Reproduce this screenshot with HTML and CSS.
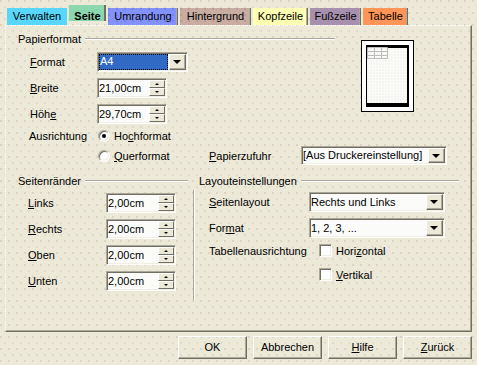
FILE: index.html
```html
<!DOCTYPE html>
<html lang="de">
<head>
<meta charset="utf-8">
<title>Seitenvorlage</title>
<link rel="stylesheet" href="styles.css">
</head>
<body>
<div class="dialog">
  <div class="tabs">
    <div class="tab t-verwalten">Verwalten</div>
    <div class="tab t-seite">Seite</div>
    <div class="tab t-umrandung">Umrandung</div>
    <div class="tab t-hintergrund">Hintergrund</div>
    <div class="tab t-kopf">Kopfzeile</div>
    <div class="tab t-fuss">Fußzeile</div>
    <div class="tab t-tabelle">Tabelle</div>
  </div>

  <div class="panel">
    <div class="pf">
      <div class="legend pf-legend"><span>Papierformat</span><i class="line"></i></div>

      <div class="row r-format">
        <span class="lbl"><u>F</u>ormat</span>
        <div class="field select sel-a4"><span class="val hl">A4</span><span class="dd"><i class="tri"></i></span></div>
      </div>
      <div class="row r-breite">
        <span class="lbl"><u>B</u>reite</span>
        <div class="field spin"><span class="val">21,00cm</span><span class="spinbtn"><b class="sb"><i class="up"></i></b><b class="sb"><i class="down"></i></b></span></div>
      </div>
      <div class="row r-hoehe">
        <span class="lbl">Höh<u>e</u></span>
        <div class="field spin"><span class="val">29,70cm</span><span class="spinbtn"><b class="sb"><i class="up"></i></b><b class="sb"><i class="down"></i></b></span></div>
      </div>
      <div class="row r-aus">
        <span class="lbl lbl-aus">Ausrichtung</span>
        <span class="radio on"></span><span class="rtext">Ho<u>c</u>hformat</span>
      </div>

      <div class="preview">
        <div class="page">
          <svg class="tbl" width="21" height="12" viewBox="0 0 21 12">
            <path d="M0.5 0.5H20.5V11.5H0.5Z M0.5 4.5H20.5 M0.5 8.5H20.5 M7.5 0.5V11.5 M14.5 0.5V11.5" fill="none" stroke="#bdbdbd" stroke-width="1"/>
          </svg>
        </div>
      </div>

      <div class="row r-quer">
        <span class="spacer"></span>
        <span class="radio"></span><span class="rtext quer"><u>Q</u>uerformat</span>
        <span class="lbl pz"><u>P</u>apierzufuhr</span>
        <div class="field select sel-pz"><span class="val">[Aus Druckereinstellung]</span><span class="dd"><i class="tri"></i></span></div>
      </div>
    </div>

    <div class="bottom">
      <div class="sr">
        <div class="legend sr-legend"><span>Seitenränder</span><i class="line"></i></div>
        <div class="srow first">
          <span class="slbl"><u>L</u>inks</span>
          <div class="field spin"><span class="val">2,00cm</span><span class="spinbtn"><b class="sb"><i class="up"></i></b><b class="sb"><i class="down"></i></b></span></div>
        </div>
        <div class="srow">
          <span class="slbl"><u>R</u>echts</span>
          <div class="field spin"><span class="val">2,00cm</span><span class="spinbtn"><b class="sb"><i class="up"></i></b><b class="sb"><i class="down"></i></b></span></div>
        </div>
        <div class="srow">
          <span class="slbl"><u>O</u>ben</span>
          <div class="field spin"><span class="val">2,00cm</span><span class="spinbtn"><b class="sb"><i class="up"></i></b><b class="sb"><i class="down"></i></b></span></div>
        </div>
        <div class="srow">
          <span class="slbl"><u>U</u>nten</span>
          <div class="field spin"><span class="val">2,00cm</span><span class="spinbtn"><b class="sb"><i class="up"></i></b><b class="sb"><i class="down"></i></b></span></div>
        </div>
      </div>

      <div class="lay">
        <div class="legend lay-legend"><span>Layouteinstellungen</span><i class="line"></i></div>
        <div class="lay-body">
          <div class="lrow">
            <span class="llbl"><u>S</u>eitenlayout</span>
            <div class="field select sel-lay"><span class="val">Rechts und Links</span><span class="dd"><i class="tri"></i></span></div>
          </div>
          <div class="lrow second">
            <span class="llbl">For<u>m</u>at</span>
            <div class="field select sel-lay"><span class="val">1, 2, 3, ...</span><span class="dd"><i class="tri"></i></span></div>
          </div>
          <div class="crow">
            <span class="clbl">Tabellenausrichtung</span>
            <span class="check"></span><span class="ctext">Hori<u>z</u>ontal</span>
          </div>
          <div class="crow second">
            <span class="clbl"></span>
            <span class="check"></span><span class="ctext"><u>V</u>ertikal</span>
          </div>
        </div>
      </div>
    </div>
  </div>

  <div class="buttons">
    <div class="btn">OK</div>
    <div class="btn">Abbrechen</div>
    <div class="btn"><u>H</u>ilfe</div>
    <div class="btn"><u>Z</u>urück</div>
  </div>
</div>
</body>
</html>
```

FILE: styles.css
```css
* { box-sizing: border-box; }

html, body {
  margin: 0;
  padding: 0;
}

body {
  width: 477px;
  height: 365px;
  overflow: hidden;
  font-family: "Liberation Sans", Arial, sans-serif;
  font-size: 11px;
  color: #000;
  background-color: #ece9d8;
  background-image:
    radial-gradient(circle at 1px 1px, #d6d0bc 0.6px, transparent 1px),
    radial-gradient(circle at 1px 1px, #dcd7c5 0.6px, transparent 1px);
  background-size: 8px 12px, 8px 12px;
  background-position: 0 0, 4px 6px;
}

u { text-decoration: underline; text-underline-offset: 1px; }

.dialog { width: 477px; height: 365px; }

/* ---------- tabs ---------- */
.tabs {
  display: flex;
  align-items: flex-end;
  gap: 2px;
  height: 25px;
  padding-left: 7px;
}

.tab {
  height: 17px;
  line-height: 17px;
  text-align: center;
  white-space: nowrap;
  box-shadow: inset -1px 0 #716f64, inset -2px 0 #aca899;
}

.t-verwalten { width: 60px; background: #58d7fb; box-shadow: none; }
.t-seite {
  width: 37px;
  height: 20px;
  line-height: 18px;
  padding-top: 2px;
  font-weight: bold;
  background: linear-gradient(#8cd8ae 0 16px, transparent 16px);
  box-shadow: none;
  position: relative;
}
.t-seite::after {
  content: "";
  position: absolute;
  right: 0;
  top: 0;
  width: 2px;
  height: 16px;
  background: #716f64;
}
.t-umrandung {
  width: 70px;
  background-color: #8391fb;
  background-image: radial-gradient(circle at 1px 1px, #6f7be0 0.6px, transparent 1px);
  background-size: 8px 6px;
}
.t-hintergrund {
  width: 71px;
  background-color: #c9aca2;
  background-image: radial-gradient(circle at 1px 1px, #b39790 0.6px, transparent 1px);
  background-size: 8px 6px;
}
.t-kopf { width: 55px; background: #ffffb4; }
.t-fuss { width: 51px; background: #a78fae; }
.t-tabelle { width: 45px; background: #ff9657; }

/* ---------- panel ---------- */
.panel {
  margin-left: 5px;
  width: 467px;
  height: 307px;
  border-top: 1px dotted #ffffff;
  border-left: 1px dotted #ffffff;
  border-right: 1px solid #716f64;
  border-bottom: 1px solid #716f64;
  box-shadow: inset -1px -1px #aca899;
  padding: 6px 0 0 12px;
}

.legend {
  display: flex;
  align-items: center;
  height: 14px;
  line-height: 14px;
  white-space: nowrap;
}
.legend .line {
  flex: 1;
  height: 2px;
  margin-left: 4px;
  border-top: 1px solid #aca899;
  border-bottom: 1px solid #ffffff;
}

/* Papierformat grid */
.pf {
  display: grid;
  grid-template-columns: 317px auto;
  align-items: start;
}
.pf > .legend, .pf > .row { grid-column: 1; }

.row {
  display: flex;
  align-items: center;
  height: 20px;
  white-space: nowrap;
}
.r-format { margin-top: 6px; }
.r-breite { margin-top: 6px; }
.r-hoehe { margin-top: 6px; }
.r-aus { margin-top: 4px; height: 16px; }
.r-quer { grid-column: 1 / 3 !important; margin-top: 2px; height: 19px; }

.lbl {
  width: 79px;
  padding-left: 12px;
}
.lbl-aus { padding-left: 11px; }
.spacer { width: 79px; }

.rtext { margin-left: 4px; }
.rtext.quer { width: 95px; }
.lbl.pz { width: 92px; padding-left: 0; }

/* fields */
.field {
  display: flex;
  align-items: center;
  height: 19px;
  border: 1px solid;
  border-color: #aca899 #ffffff #ffffff #aca899;
  box-shadow: inset 1px 1px #716f64, inset -1px -1px #f1efe2;
  background: #fbfbf9;
}
.field .val {
  flex: 1;
  padding-left: 1px;
  line-height: 15px;
  white-space: nowrap;
  overflow: hidden;
}

.spin { width: 70px; height: 20px; }
.spinbtn {
  display: flex;
  flex-direction: column;
  width: 16px;
  height: 16px;
  margin: 1px 1px 1px 0;
}
.sb {
  flex: 1;
  display: flex;
  align-items: center;
  justify-content: center;
  background: #ece9d8;
  border: 1px solid;
  border-color: #ffffff #716f64 #716f64 #ffffff;
}
.sb .up, .sb .down {
  width: 0;
  height: 0;
  border-left: 2px solid transparent;
  border-right: 2px solid transparent;
}
.sb .up { border-bottom: 2px solid #000; }
.sb .down { border-top: 2px solid #000; }

.select { height: 20px; }
.dd {
  width: 17px;
  height: 16px;
  margin: 1px 1px 1px 0;
  display: flex;
  align-items: center;
  justify-content: center;
  background: #ece9d8;
  border: 1px solid;
  border-color: #ffffff #716f64 #716f64 #ffffff;
  box-shadow: inset -1px -1px #aca899;
}
.tri {
  width: 0;
  height: 0;
  border-left: 4px solid transparent;
  border-right: 4px solid transparent;
  border-top: 4px solid #000;
  margin-right: 1px;
}

.sel-a4 { width: 91px; }
.sel-a4 .val.hl {
  align-self: stretch;
  margin: 1px 1px 1px 1px;
  padding-left: 1px;
  line-height: 14px;
  background: #316ac5;
  color: #fff;
  outline: 1px dotted #000;
  outline-offset: -1px;
}
.sel-pz { width: 146px; height: 19px; }
.sel-pz .dd { height: 15px; }
.sel-lay { width: 136px; }

/* radio / checkbox */
.radio {
  position: relative;
  width: 12px;
  height: 12px;
  margin-left: 1px;
  border-radius: 50%;
  background: #ffffff;
  border: 1px solid;
  border-color: #aca899 #ffffff #ffffff #aca899;
  box-shadow: inset 1px 1px #716f64, inset -1px -1px #f1efe2;
}
.radio.on::after {
  content: "";
  position: absolute;
  left: 3px;
  top: 3px;
  width: 4px;
  height: 4px;
  border-radius: 50%;
  background: #000;
}
.check {
  width: 13px;
  height: 13px;
  background: #ffffff;
  border: 1px solid;
  border-color: #aca899 #ffffff #ffffff #aca899;
  box-shadow: inset 1px 1px #716f64, inset -1px -1px #f1efe2;
}

/* preview */
.preview {
  grid-column: 2;
  grid-row: 1 / span 5;
  margin-left: 26px;
  margin-top: 8px;
  width: 53px;
  height: 72px;
  border: 1px solid #000;
  background: #ffffff;
  padding: 4px;
}
.page {
  width: 43px;
  height: 62px;
  border-style: solid;
  border-color: #000;
  border-width: 3px 2px 4px 1px;
  background-color: #fbfbf9;
  background-image: radial-gradient(circle at 1px 1px, #eeede8 0.5px, transparent 0.9px);
  background-size: 3px 3px;
}
.tbl { display: block; margin: -1px 0 0 0; }

/* bottom */
.bottom {
  display: flex;
  margin-top: 9px;
}
.sr { width: 172px; }
.sr-legend .line { margin-right: 2px; }

.srow {
  display: flex;
  align-items: center;
  height: 20px;
  margin-top: 6px;
}
.srow.first { margin-top: 5px; }
.slbl { width: 88px; padding-left: 10px; }

.lay { width: 266px; margin-left: 3px; }
.lay-legend { padding-left: 6px; }
.lay-body {
  margin-top: 2px;
  height: 110px;
  border-left: 1px solid #aca899;
  box-shadow: inset 1px 0 #ffffff;
  padding: 2px 0 0 15px;
}
.lrow {
  display: flex;
  align-items: center;
  height: 20px;
}
.lrow.second { margin-top: 6px; }
.llbl { width: 100px; }

.crow {
  display: flex;
  align-items: center;
  height: 13px;
  margin-top: 6px;
}
.crow.second { margin-top: 11px; }
.clbl { width: 110px; white-space: nowrap; }
.ctext { margin-left: 4px; }

/* buttons */
.buttons {
  display: flex;
  justify-content: flex-end;
  gap: 6px;
  padding-right: 5px;
  margin-top: 4px;
}
.btn {
  width: 69px;
  height: 23px;
  line-height: 21px;
  text-align: center;
  border: 1px solid;
  border-color: #ffffff #716f64 #716f64 #ffffff;
  box-shadow: inset -1px -1px #aca899;
}
```
